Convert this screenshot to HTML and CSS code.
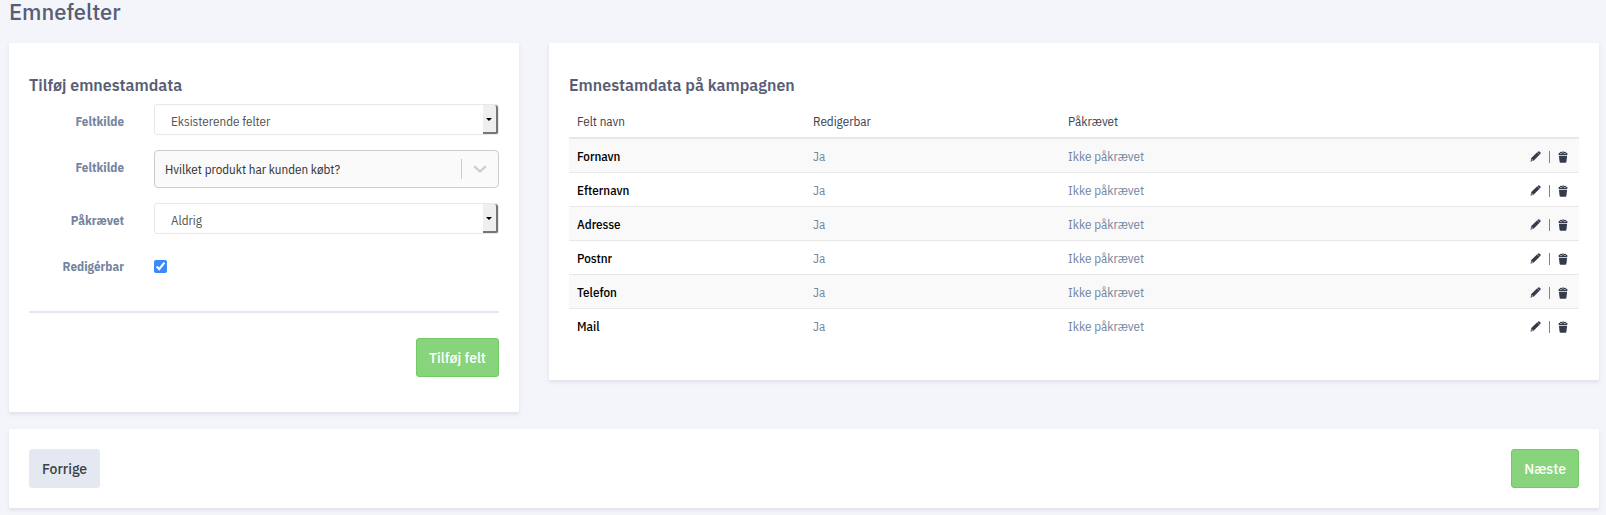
FILE: index.html
```html
<!DOCTYPE html>
<html lang="da">

<head>
  <meta charset="UTF-8">
  <title>Emnefelter</title>
  <link rel="stylesheet" href="styles.css">
</head>

<body>
  <!-- Icons used in the table -->
  <svg class="icon-defs" width="0" height="0" aria-hidden="true">
    <symbol id="icon-pencil" viewBox="0 0 12 12">
      <path d="M1.4 7.6 7.6 1.6 10.4 4.2 4.2 10.3.6 11.6z" />
      <path d="M7.9 1.3 9 .5Q9.8 0 10.6.7L11.3 1.4Q12 2.2 11.4 3L10.6 4z" />
      <path d="M1.9 8.6 3.4 10 1.8 10.5z" fill="#fff" />
    </symbol>
    <symbol id="icon-trash" viewBox="0 0 10 12">
      <path d="M.4 3.3Q.3 2 2 1.5L2.6.8 4 1 5 .3 6.2 1 7.5.8 8 1.5Q9.7 2 9.6 3.3L9 3.9H1z" />
      <path d="M.9 4.8H9.1L8.4 10.8Q8.3 11.8 7.2 11.8H2.8Q1.7 11.8 1.6 10.8z" />
      <path d="M2.3 2.5H3.7M4.4 1.8H5.6M6.3 2.5H7.7" stroke="#fff" stroke-width=".7" />
    </symbol>
  </svg>

  <h1>Emnefelter</h1>

  <div class="row">
    <div class="col-form">
      <form class="card" id="fieldForm">
        <h2>Tilføj emnestamdata</h2>

        <div class="form-group">
          <label for="source">Feltkilde</label>
          <div class="control">
            <select id="source" class="plain-select">
              <option>Eksisterende felter</option>
            </select>
            <span class="select-arrow"></span>
          </div>
        </div>

        <div class="form-group">
          <label for="field">Feltkilde</label>
          <div class="control">
            <select id="field" class="search-select">
              <option>Hvilket produkt har kunden købt?</option>
            </select>
            <span class="indicator">
              <svg width="20" height="20" viewBox="0 0 20 20">
                <path d="M4.8 7.8 10 12.6 15.2 7.8" fill="none" stroke="#ccc" stroke-width="2.2" stroke-linecap="round" />
              </svg>
            </span>
          </div>
        </div>

        <div class="form-group">
          <label for="required">Påkrævet</label>
          <div class="control">
            <select id="required" class="plain-select">
              <option>Aldrig</option>
            </select>
            <span class="select-arrow"></span>
          </div>
        </div>

        <div class="form-group">
          <label for="editable">Redigérbar</label>
          <div class="control check">
            <input type="checkbox" id="editable" checked>
          </div>
        </div>

        <hr>
        <div class="form-actions">
          <button type="button" class="btn btn-success">Tilføj felt</button>
        </div>
      </form>
    </div>

    <div class="col-table">
      <div class="card">
        <h2>Emnestamdata på kampagnen</h2>
        <table>
          <thead>
            <tr>
              <th class="name">Felt navn</th>
              <th class="editable">Redigerbar</th>
              <th>Påkrævet</th>
              <th class="actions"></th>
            </tr>
          </thead>
          <tbody id="fields"></tbody>
        </table>
      </div>
    </div>
  </div>

  <div class="card footer">
    <button type="button" class="btn btn-secondary">Forrige</button>
    <button type="button" class="btn btn-success">Næste</button>
  </div>

  <script>
    const fields = ["Fornavn", "Efternavn", "Adresse", "Postnr", "Telefon", "Mail"];

    document.getElementById("fields").innerHTML = fields.map(name => `
      <tr>
        <td class="name">${name}</td>
        <td>Ja</td>
        <td>Ikke påkrævet</td>
        <td class="actions">
          <div class="action-list">
            <a href="#"><svg width="11" height="11"><use href="#icon-pencil" /></svg></a>
            <span class="divider"></span>
            <a href="#"><svg width="10" height="12"><use href="#icon-trash" /></svg></a>
          </div>
        </td>
      </tr>`).join("");
  </script>
</body>

</html>
```

FILE: styles.css
```css
* {
  box-sizing: border-box;
}

body {
  margin: 0;
  padding: 0 7px 7px 9px;
  font-family: "IBM Plex Sans Condensed", Roboto, sans-serif;
  font-size: 13px;
  color: #74859f;
  background: #f4f5fa;
}

.icon-defs {
  position: absolute;
}

h1,
h2,
.btn {
  font-family: "IBM Plex Sans", "IBM Plex Sans Condensed", Roboto, sans-serif;
}

h1 {
  margin: 0 0 19px;
  font-size: 22px;
  line-height: 24px;
  font-weight: 500;
  color: #595d75;
}

h2 {
  margin: 0;
  font-size: 16px;
  line-height: 20px;
  font-weight: 600;
  color: #595d75;
}

.row {
  display: flex;
  align-items: flex-start;
  margin: 0 -15px 17px;
}

.col-form {
  width: 33.3333%;
  padding: 0 15px;
}

.col-table {
  width: 66.6667%;
  padding: 0 15px;
}

.card {
  padding: 32px 20px 35px;
  background: #fff;
  box-shadow: 0 2px 4px rgba(60, 70, 110, 0.12);
}

/* Form */
.form-group {
  display: grid;
  grid-template-columns: 1fr 3fr;
  margin: 0 -15px 15px;
}

h2 + .form-group {
  margin-top: 9px;
}

.form-group label {
  padding: 10px 15px 0;
  line-height: 16px;
  text-align: right;
  font-size: 13px;
  font-weight: 700;
}

.control {
  display: grid;
  position: relative;
  margin: 0 15px;
}

select {
  width: 100%;
  appearance: none;
  font-family: inherit;
  font-size: 13px;
  border-radius: 4px;
}

.plain-select {
  height: 31px;
  padding: 3px 16px 0;
  border: 1px solid #e8e8e8;
  border-radius: 3px;
  color: #555;
  background: #fff;
}

.select-arrow {
  display: grid;
  place-items: center;
  position: absolute;
  top: 1px;
  right: 1px;
  bottom: 1px;
  width: 15px;
  padding-top: 2px;
  border-right: 2px solid #767676;
  border-bottom: 2px solid #767676;
  border-radius: 0 3px 2px 0;
  background: #efefef;
  pointer-events: none;
}

.select-arrow::after {
  content: "";
  border: 3px solid transparent;
  border-top: 3px solid #000;
  border-bottom: 0;
}

.search-select {
  height: 38px;
  padding: 0 10px;
  border: 1px solid #ccc;
  color: #333;
  background: #fafafa;
}

.indicator {
  display: grid;
  place-items: center;
  position: absolute;
  top: 9px;
  right: 1px;
  bottom: 9px;
  width: 37px;
  border-left: 1px solid #ccc;
  pointer-events: none;
}

.check {
  align-items: center;
  height: 35px;
}

.check input {
  width: 13px;
  height: 13px;
  margin: 0;
  accent-color: #3b88fd;
}

hr {
  height: 2px;
  margin: 27px 0 25px;
  border: 0;
  background: #e4e8f2;
}

.form-actions {
  display: flex;
  justify-content: flex-end;
}

.btn {
  height: 39px;
  padding: 0 12px;
  border: 1px solid;
  border-radius: 3px;
  font-size: 14px;
  font-weight: 500;
}

.btn-success {
  color: #fff;
  background: #88d47c;
  border-color: #71ca63;
}

.btn-secondary {
  color: #3b3f46;
  background: #e4e8f1;
  border-color: #e4e8f1;
}

/* Table */
table {
  width: 100%;
  margin: 9px 0 3px;
  table-layout: fixed;
  border-collapse: collapse;
}

th,
td {
  height: 34px;
  padding: 1px 8px 0;
  text-align: left;
}

th {
  font-weight: 400;
  color: #3e4351;
  border-bottom: 2px solid #e8e8e8;
}

td {
  padding-top: 3px;
  border-bottom: 1px solid #e8e8e8;
}

tbody tr:nth-child(odd) {
  background: #f9f9f9;
}

tbody tr:last-child td {
  border-bottom: 0;
}

th.name {
  width: 236px;
}

th.editable {
  width: 255px;
}

th.actions {
  width: 100px;
}

td.name {
  font-weight: 500;
  color: #000;
}

.action-list {
  display: flex;
  align-items: center;
  justify-content: flex-end;
  gap: 8px;
  padding-right: 3px;
}

.action-list a {
  display: flex;
}

.action-list svg {
  fill: #353b4b;
}

.divider {
  width: 1px;
  height: 12px;
  background: #74859f;
}

/* Bottom navigation */
.footer {
  display: flex;
  justify-content: space-between;
  padding: 20px;
}
```
